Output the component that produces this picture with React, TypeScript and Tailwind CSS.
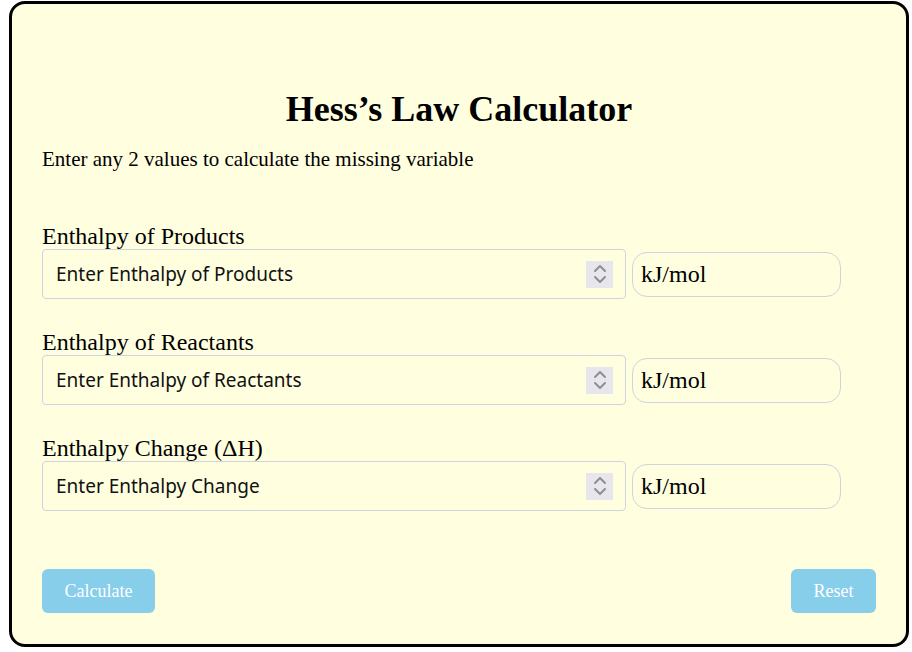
import { useState } from 'react'

const FIELDS = [
  { key: 'products', label: 'Enthalpy of Products', placeholder: 'Enter Enthalpy of Products' },
  { key: 'reactants', label: 'Enthalpy of Reactants', placeholder: 'Enter Enthalpy of Reactants' },
  { key: 'change', label: 'Enthalpy Change (ΔH)', placeholder: 'Enter Enthalpy Change' },
]

function Spinner() {
  return (
    <div className="w-[27px] h-[27px] bg-[#e6e6ec] flex items-center justify-center shrink-0">
      <svg width="14" height="22" viewBox="0 0 14 22" fill="none" stroke="#8e8e96" strokeWidth="2" strokeLinecap="round" strokeLinejoin="round">
        <path d="M2 8 7 3l5 5" />
        <path d="M2 14l5 5 5-5" />
      </svg>
    </div>
  )
}

export default function App() {
  const [values, setValues] = useState<Record<string, string>>({})

  return (
    <div className="min-h-[652px] pl-[9px] pt-[1px] pb-[5px] font-['Liberation_Serif',serif] text-black">
      <div className="w-[900px] h-[646px] border-[3px] border-black rounded-[16px] bg-[#ffffe0] px-[30px] pt-[87px]">
        <h1 className="text-center text-[36px] leading-[37px] font-bold">Hess’s Law Calculator</h1>
        <p className="mt-[20px] text-[21px] leading-[23px]">Enter any 2 values to calculate the missing variable</p>

        <div className="mt-[52px] flex flex-col gap-[30px]">
          {FIELDS.map(f => (
            <div key={f.key}>
              <label className="block text-[24px] leading-[26px]">{f.label}</label>
              <div className="flex items-center gap-[6px]">
                <div className="w-[584px] h-[50px] border border-[#cdd3df] rounded-[4px] flex items-center pl-[13px] pr-[12px]">
                  <input
                    type="text"
                    inputMode="decimal"
                    value={values[f.key] ?? ''}
                    onChange={e => setValues({ ...values, [f.key]: e.target.value })}
                    placeholder={f.placeholder}
                    className="flex-1 min-w-0 bg-transparent outline-none font-['Noto_Sans',sans-serif] text-[19px] text-[#111] placeholder:text-[#111]"
                  />
                  <Spinner />
                </div>
                <div className="w-[209px] h-[45px] border border-[#cdd3df] rounded-[15px] flex items-center pl-[8px] text-[24px]">
                  kJ/mol
                </div>
              </div>
            </div>
          ))}
        </div>

        <div className="mt-[58px] flex justify-between">
          <button className="w-[113px] h-[44px] rounded-[6px] bg-[#87ceeb] text-white text-[18px]">Calculate</button>
          <button
            className="w-[85px] h-[44px] rounded-[6px] bg-[#87ceeb] text-white text-[18px]"
            onClick={() => setValues({})}
          >
            Reset
          </button>
        </div>
      </div>
    </div>
  )
}
